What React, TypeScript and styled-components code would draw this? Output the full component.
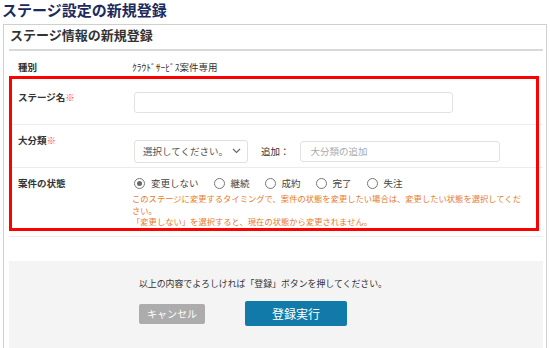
import * as React from 'react';
import styled, { createGlobalStyle } from 'styled-components';

const GlobalStyle = createGlobalStyle`
  body {
    margin: 0;
    background: #fff;
    font-family: "Noto Sans CJK JP", "Noto Sans", sans-serif;
    color: #333;
  }
`;

const Page = styled.div`
  width: 550px;
  height: 348px;
  overflow: hidden;
`;

const Title = styled.h1`
  margin: 0;
  padding: 1px 0 0 2px;
  height: 23px;
  line-height: 17px;
  font-size: 15px;
  font-weight: bold;
  color: #1c2b5e;
`;

const Panel = styled.div`
  margin-left: 3px;
  width: 544px;
  height: 324px;
  box-sizing: border-box;
  border: 1px solid #cfcfcf;
  border-bottom: none;
  padding: 0 3px 0 5px;
`;

const Heading = styled.h2`
  margin: 0;
  height: 24px;
  line-height: 20px;
  font-size: 13px;
  font-weight: bold;
  color: #333;
  border-bottom: 2px solid #d9d9d9;
  padding-left: 1px;
`;

const Table = styled.div`
  display: flex;
  flex-direction: column;
`;

const Row = styled.div<{ $h: number; $pt: number; $line?: boolean }>`
  display: grid;
  grid-template-columns: 123px 1fr;
  height: ${(p) => p.$h}px;
  box-sizing: border-box;
  padding-top: ${(p) => p.$pt}px;
  border-bottom: 1px solid ${(p) => (p.$line === false ? 'transparent' : '#ececec')};
`;

const Label = styled.div<{ $pt?: number }>`
  padding-left: 9px;
  margin-top: ${(p) => p.$pt ?? 0}px;
  font-size: 9.5px;
  font-weight: bold;
  line-height: 14px;
  color: #333;
`;

const Req = styled.span`
  color: #ff4d4d;
`;

const Value = styled.div`
  font-size: 9.5px;
  line-height: 14px;
  color: #333;
`;

const Group = styled.div`
  position: relative;
`;

const Highlight = styled.div`
  position: absolute;
  top: -2px;
  left: 0;
  right: 4px;
  bottom: 6px;
  border: 3px solid #ff0000;
  pointer-events: none;
`;

const TextInput = styled.div<{ $w: number }>`
  width: ${(p) => p.$w}px;
  height: 21px;
  box-sizing: border-box;
  margin-left: 2px;
  border: 1px solid #e2e2e2;
  border-radius: 3px;
  background: #fff;
  padding-left: 10px;
  font-size: 9.5px;
  line-height: 19px;
  color: #aaa;
`;

const Inline = styled.div`
  display: flex;
  align-items: center;
`;

const Select = styled.div`
  width: 114px;
  height: 23px;
  box-sizing: border-box;
  margin-left: 2px;
  border: 1px solid #e0e0e0;
  border-radius: 3px;
  display: flex;
  align-items: center;
  justify-content: space-between;
  padding: 0 6px 0 8px;
  font-size: 9.5px;
  white-space: nowrap;
  color: #555;
`;

const AddLabel = styled.span`
  margin: 0 8px 0 13px;
  font-size: 9.5px;
  color: #333;
`;

const Radios = styled.div`
  display: flex;
  align-items: center;
  height: 14px;
  padding-left: 2px;
`;

const Radio = styled.label`
  display: flex;
  align-items: center;
  margin-right: 15px;
  font-size: 9.5px;
  color: #444;
`;

const Circle = styled.span<{ $on?: boolean }>`
  width: 11px;
  height: 11px;
  box-sizing: border-box;
  border-radius: 50%;
  border: 1px solid #777;
  margin-right: 6px;
  display: flex;
  align-items: center;
  justify-content: center;
  &::after {
    content: '';
    width: 5px;
    height: 5px;
    border-radius: 50%;
    background: ${(p) => (p.$on ? '#666' : 'transparent')};
  }
`;

const Note = styled.p`
  margin: 3px 0 0 0;
  width: 390px;
  font-size: 8.3px;
  line-height: 11.5px;
  color: #e87a2c;
`;

const Footer = styled.div`
  margin-top: 24px;
  height: 88px;
  background: #f4f4f4;
  display: flex;
  flex-direction: column;
  align-items: flex-start;
  padding: 16px 0 0 130px;
  box-sizing: border-box;
`;

const Confirm = styled.p`
  margin: 0;
  font-size: 8.9px;
  line-height: 14px;
  color: #333;
`;

const Buttons = styled.div`
  display: flex;
  align-items: center;
  gap: 40px;
  margin-top: 10px;
`;

const Button = styled.button<{ $primary?: boolean }>`
  border: none;
  border-radius: 2px;
  color: #fff;
  font-family: inherit;
  cursor: pointer;
  width: ${(p) => (p.$primary ? 102 : 66)}px;
  height: ${(p) => (p.$primary ? 25 : 20)}px;
  font-size: ${(p) => (p.$primary ? 12 : 10)}px;
  background: ${(p) => (p.$primary ? '#127aa8' : '#acacac')};
  padding: 0;
`;

const Chevron = () => (
  <svg width="9" height="6" viewBox="0 0 9 6" fill="none">
    <path d="M1 1l3.5 3.5L8 1" stroke="#666" strokeWidth="1.1" />
  </svg>
);

const statuses = ['変更しない', '継続', '成約', '完了', '失注'];

export default function App() {
  return (
    <Page>
      <GlobalStyle />
      <Title>ステージ設定の新規登録</Title>
      <Panel>
        <Heading>ステージ情報の新規登録</Heading>
        <Table>
          <Row $h={27} $pt={9} $line={false}>
            <Label>種別</Label>
            <Value>ｸﾗｳﾄﾞｻｰﾋﾞｽ案件専用</Value>
          </Row>
          <Group>
            <Row $h={47} $pt={14}>
              <Label $pt={-2}>
                ステージ名<Req>※</Req>
              </Label>
              <TextInput $w={319} />
            </Row>
            <Row $h={43} $pt={10}>
              <Label $pt={-2}>
                大分類<Req>※</Req>
              </Label>
              <Inline>
                <Select>
                  <span>選択してください。</span>
                  <Chevron />
                </Select>
                <AddLabel>追加：</AddLabel>
                <TextInput $w={200}>大分類の追加</TextInput>
              </Inline>
            </Row>
            <Row $h={69} $pt={8}>
              <Label>案件の状態</Label>
              <div>
                <Radios>
                  {statuses.map((s, i) => (
                    <Radio key={s}>
                      <Circle $on={i === 0} />
                      {s}
                    </Radio>
                  ))}
                </Radios>
                <Note>
                  このステージに変更するタイミングで、案件の状態を変更したい場合は、変更したい状態を選択してください。
                  <br />
                  「変更しない」を選択すると、現在の状態から変更されません。
                </Note>
              </div>
            </Row>
            <Highlight />
          </Group>
        </Table>
        <Footer>
          <Confirm>以上の内容でよろしければ「登録」ボタンを押してください。</Confirm>
          <Buttons>
            <Button>キャンセル</Button>
            <Button $primary>登録実行</Button>
          </Buttons>
        </Footer>
      </Panel>
    </Page>
  );
}
